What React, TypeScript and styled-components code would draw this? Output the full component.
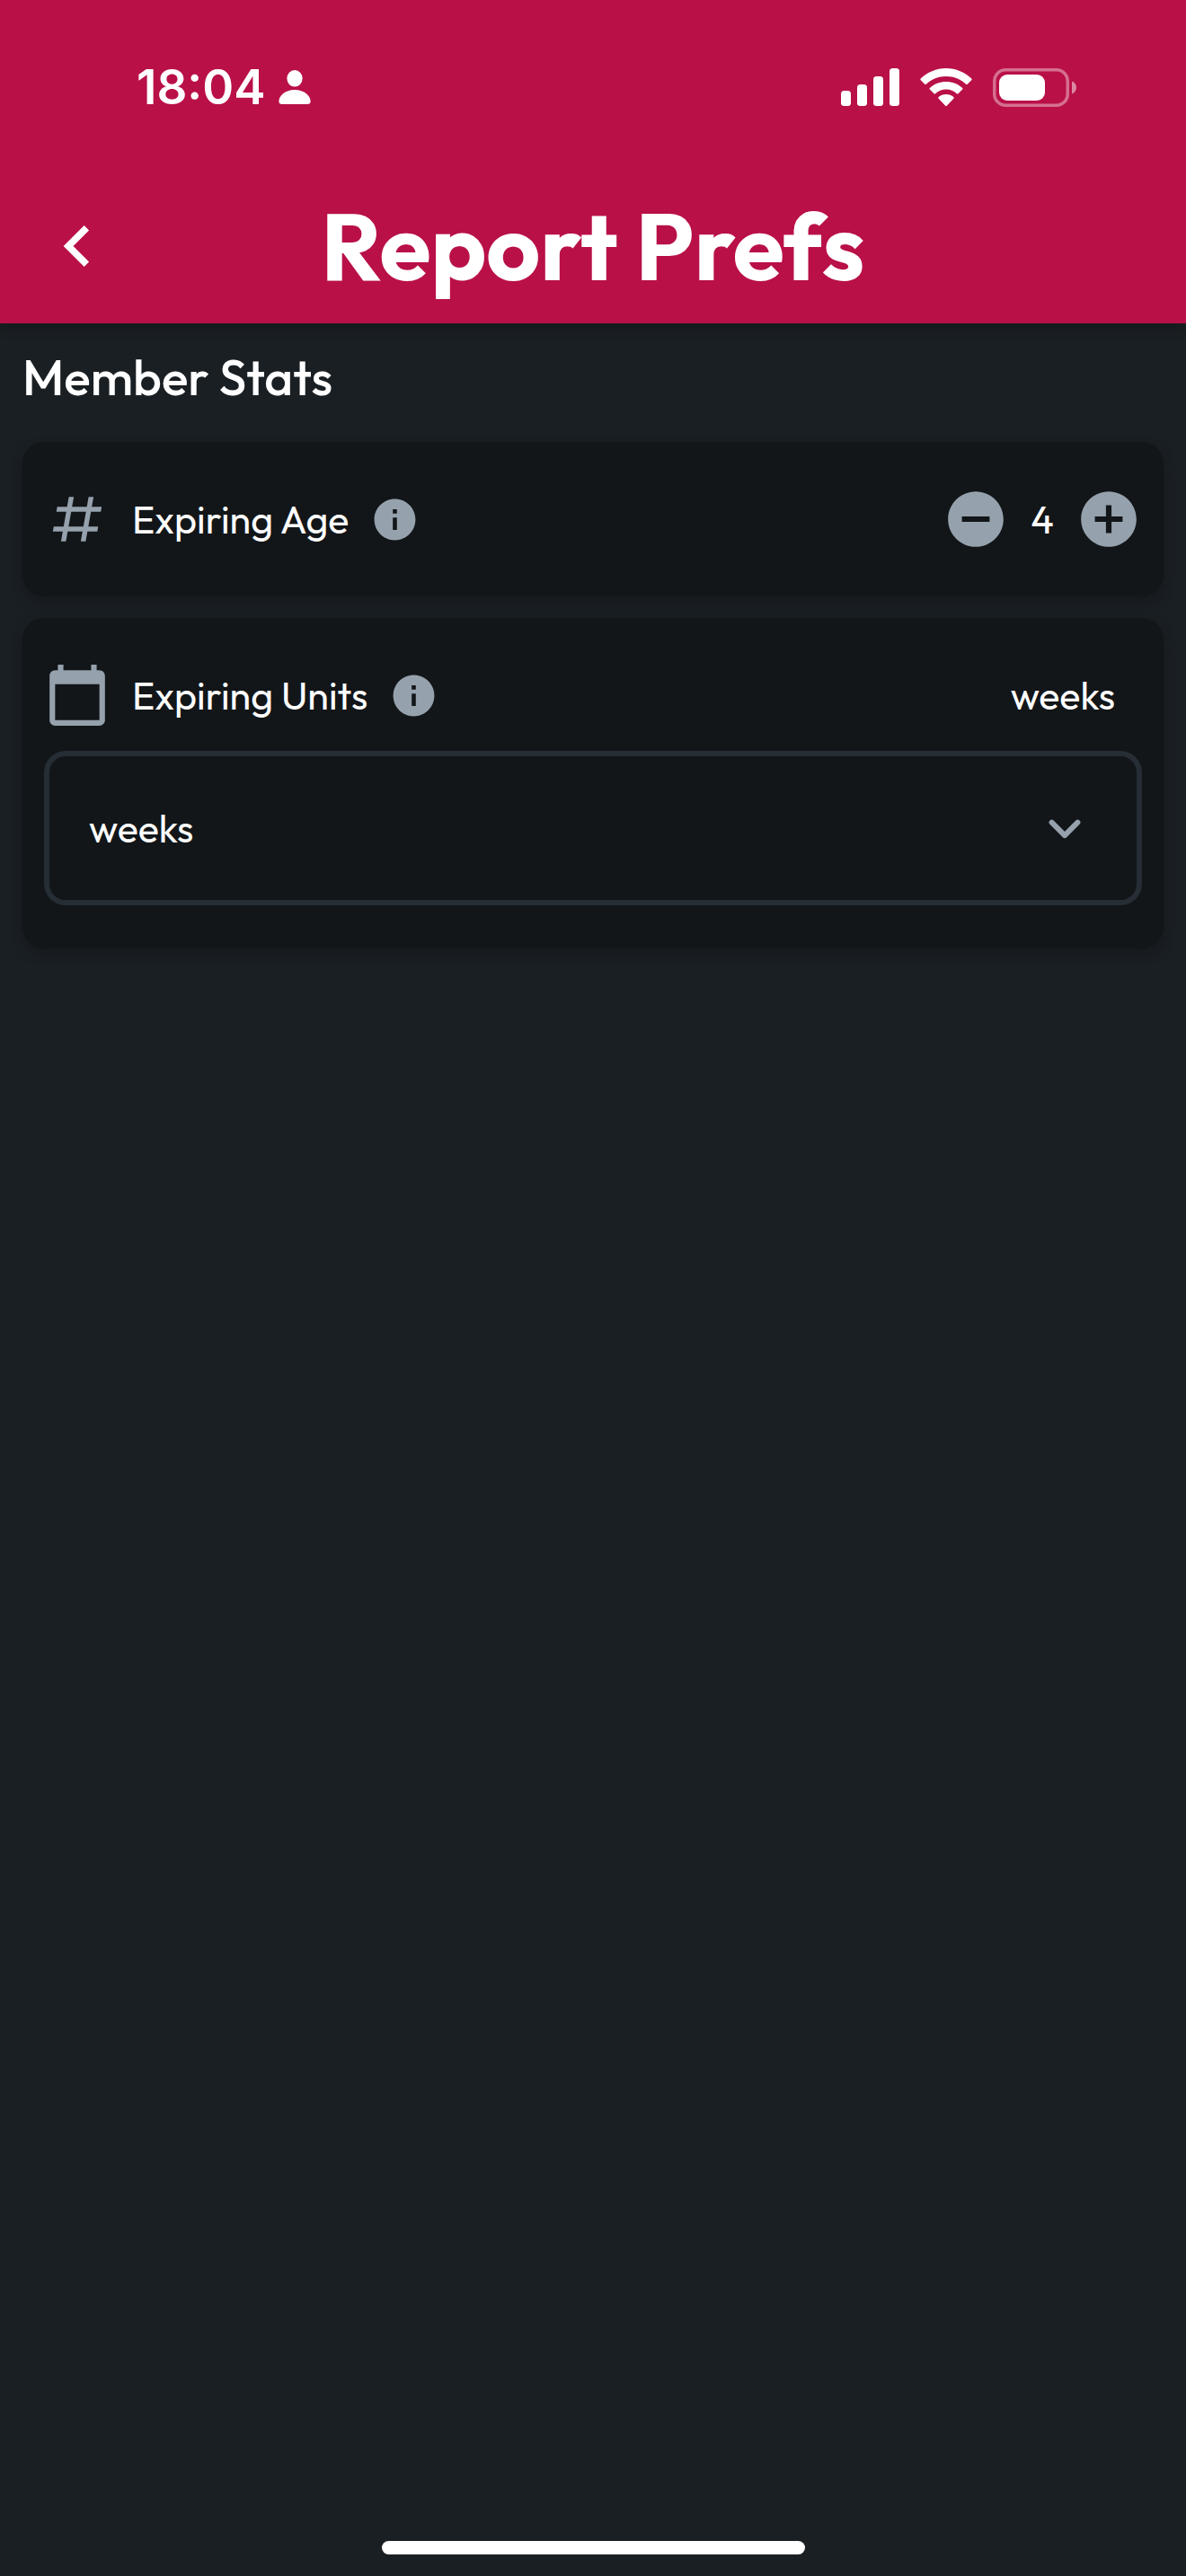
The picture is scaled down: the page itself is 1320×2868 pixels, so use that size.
import React, { useState } from "react";
import styled, { createGlobalStyle } from "styled-components";

const colors = {
  primary: "#b91047",
  background: "#1a1f23",
  card: "#121619",
  line: "#262d34",
  muted: "#95a1ac",
  text: "#ffffff",
};

const GlobalStyle = createGlobalStyle`
  * {
    box-sizing: border-box;
  }

  body {
    margin: 0;
    background: ${colors.background};
    color: ${colors.text};
    font-family: Outfit, Lato, "Liberation Sans", sans-serif;
    font-weight: 400;
  }
`;

const Page = styled.div`
  display: flex;
  flex-direction: column;
  min-height: 100vh;
`;

const Header = styled.header`
  background: ${colors.primary};
  box-shadow: 0 6px 12px rgba(0, 0, 0, 0.2);
`;

const StatusBar = styled.div`
  display: flex;
  align-items: center;
  justify-content: space-between;
  height: 188px;
  padding: 6px 121px 0 152px;
`;

const StatusGroup = styled.div<{ $gap: number }>`
  display: flex;
  align-items: center;
  gap: ${(p) => p.$gap}px;
`;

const Clock = styled.time`
  font-family: Inter, sans-serif;
  font-size: 53px;
  font-weight: 600;
  line-height: 64px;
`;

const NavBar = styled.div`
  display: grid;
  grid-template-columns: 92px 1fr 92px;
  align-items: center;
  height: 172px;
  padding: 0 40px;
`;

const Title = styled.h1`
  margin: 0;
  font-size: 104px;
  font-weight: 700;
  line-height: 130px;
  text-align: center;
`;

const IconButton = styled.button`
  display: flex;
  padding: 0;
  border: 0;
  background: none;
  color: inherit;
  cursor: pointer;
`;

const Main = styled.main`
  display: flex;
  flex-direction: column;
  gap: 24px;
  padding: 24px 25px;
`;

const SectionTitle = styled.h2`
  margin: 0;
  padding-bottom: 12px;
  font-size: 55px;
  font-weight: 500;
  line-height: 72px;
`;

const Card = styled.section`
  padding: 24px;
  border-radius: 24px;
  background: ${colors.card};
  box-shadow: 0 6px 12px rgba(20, 20, 26, 0.6);
`;

const SelectCard = styled(Card)`
  padding-bottom: 48px;
`;

const Row = styled.div`
  display: flex;
  align-items: center;
  gap: 24px;
  height: 124px;
  color: ${colors.muted};
`;

const IconSlot = styled.span`
  display: flex;
  justify-content: center;
  width: 74px;
`;

const Label = styled.label`
  color: ${colors.text};
  font-size: 43px;
  line-height: 56px;
`;

const Stepper = styled.div`
  display: flex;
  align-items: center;
  margin-left: auto;
`;

const Count = styled.output`
  width: 74px;
  color: ${colors.text};
  font-size: 43px;
  line-height: 56px;
  text-align: center;
`;

const CurrentValue = styled.span`
  margin-left: auto;
  padding-right: 30px;
  color: ${colors.text};
  font-size: 43px;
  line-height: 56px;
`;

const SelectBox = styled.div`
  display: grid;
  align-items: center;
  color: ${colors.muted};

  > * {
    grid-area: 1 / 1;
  }
`;

const Select = styled.select`
  appearance: none;
  width: 100%;
  height: 172px;
  padding: 0 108px 0 44px;
  border: 6px solid ${colors.line};
  border-radius: 24px;
  background: ${colors.card};
  color: ${colors.text};
  font-family: inherit;
  font-size: 43px;
  font-weight: inherit;
`;

const SelectArrow = styled.span`
  display: flex;
  justify-self: end;
  padding-right: 50px;
  pointer-events: none;
`;

const HomeIndicator = styled.div`
  width: 471px;
  height: 15px;
  margin: auto auto 24px;
  border-radius: 8px;
  background: ${colors.text};
`;

const paths = {
  back: "M15.41 16.58L10.83 12l4.58-4.59L14 6l-6 6 6 6z",
  pound:
    "M5.41 21L6.12 17H2.12L2.47 15H6.47L7.53 9H3.53L3.88 7H7.88L8.59 3H10.59L9.88 7H15.88L16.59 3H18.59L17.88 7H21.88L21.53 9H17.53L16.47 15H20.47L20.12 17H16.12L15.41 21H13.41L14.12 17H8.12L7.41 21zM9.53 9L8.47 15H14.47L15.53 9z",
  calendar:
    "M20 3h-1V1h-2v2H7V1H5v2H4c-1.1 0-2 .9-2 2v16c0 1.1.9 2 2 2h16c1.1 0 2-.9 2-2V5c0-1.1-.9-2-2-2zm0 18H4V8h16v13z",
  info: "M12 2C6.48 2 2 6.48 2 12s4.48 10 10 10 10-4.48 10-10S17.52 2 12 2zm1 15h-2v-6h2v6zm0-8h-2V7h2v2z",
  minus:
    "M12 2C6.48 2 2 6.48 2 12s4.48 10 10 10 10-4.48 10-10S17.52 2 12 2zm5 11H7v-2h10v2z",
  plus: "M12 2C6.48 2 2 6.48 2 12s4.48 10 10 10 10-4.48 10-10S17.52 2 12 2zm5 11h-4v4h-2v-4H7v-2h4V7h2v4h4v2z",
};

function Icon({ name, size }: { name: keyof typeof paths; size: number }) {
  return (
    <svg width={size} height={size} viewBox="0 0 24 24" fill="currentColor" aria-hidden="true">
      <path d={paths[name]} />
    </svg>
  );
}

function PersonIcon() {
  return (
    <svg width="36" height="38" viewBox="0 0 36 38" fill="currentColor" aria-hidden="true">
      <ellipse cx="18" cy="9.3" rx="8.6" ry="9.3" />
      <path d="M4 38C1.500 38 .4 37 .4 34.800C.4 29 7 22 18 22s17.600 7 17.600 12.800C35.600 37 34.500 38 32 38z" />
    </svg>
  );
}

function SignalIcon() {
  return (
    <svg width="65" height="42" viewBox="0 0 65 42" fill="currentColor" aria-hidden="true">
      <rect x="0" y="25" width="11" height="17" rx="3.500" />
      <rect x="18" y="18" width="11" height="24" rx="3.500" />
      <rect x="36" y="9" width="11" height="33" rx="3.500" />
      <rect x="54" y="0" width="11" height="42" rx="3.500" />
    </svg>
  );
}

function WifiIcon() {
  return (
    <svg width="58" height="43" viewBox="0 0 58 43" fill="currentColor" aria-hidden="true">
      <path d="M29 0C40 0 50 4.500 57.300 11.500c.5.500.5 1.200 0 1.700l-4.600 4.500c-.5.500-1.100.5-1.600 0C45.300 12.200 37.500 9 29 9S12.700 12.200 6.900 17.700c-.5.500-1.100.5-1.600 0L.7 13.200c-.5-.5-.5-1.200 0-1.700C8 4.500 18 0 29 0z" />
      <path d="M29 15c7 0 13.400 2.600 18.200 7 .5.500.5 1.100 0 1.600l-4.700 4.600c-.5.500-1.100.5-1.600 0C37.700 25.400 33.600 23.600 29 23.600s-8.700 1.800-11.900 4.600c-.5.500-1.100.5-1.600 0l-4.700-4.600c-.5-.5-.5-1.100 0-1.600C15.600 17.600 22 15 29 15z" />
      <path d="M29 29c3.300 0 6.200 1.200 8.400 3.100.5.500.5 1.100 0 1.600l-7.600 8.100c-.5.500-1.100.5-1.600 0l-7.600-8.100c-.5-.5-.5-1.100 0-1.600C22.800 30.200 25.700 29 29 29z" />
    </svg>
  );
}

function BatteryIcon() {
  return (
    <svg width="94" height="43" viewBox="0 0 94 43" aria-hidden="true">
      <rect x="1.750" y="1.750" width="81.500" height="39.500" rx="12.500" fill="none" stroke="#fff" strokeOpacity=".4" strokeWidth="3.500" />
      <rect x="7" y="7" width="51" height="29" rx="9" fill="#fff" />
      <path d="M88 14.500c3 1 5 3.800 5 7s-2 6-5 7z" fill="#fff" fillOpacity=".5" />
    </svg>
  );
}

function ChevronDown() {
  return (
    <svg width="72" height="72" viewBox="0 0 24 24" fill="none" stroke="currentColor" strokeWidth="2" strokeLinecap="round" strokeLinejoin="round" aria-hidden="true">
      <path d="M7.200 9.900l4.800 4.800 4.800-4.800" />
    </svg>
  );
}

export default function App() {
  const [age, setAge] = useState(4);
  const [units, setUnits] = useState("weeks");

  return (
    <Page>
      <GlobalStyle />
      <Header>
        <StatusBar>
          <StatusGroup $gap={14}>
            <Clock>18:04</Clock>
            <PersonIcon />
          </StatusGroup>
          <StatusGroup $gap={23}>
            <SignalIcon />
            <WifiIcon />
            <BatteryIcon />
          </StatusGroup>
        </StatusBar>
        <NavBar>
          <IconButton type="button" aria-label="Back">
            <Icon name="back" size={92} />
          </IconButton>
          <Title>Report Prefs</Title>
        </NavBar>
      </Header>
      <Main>
        <SectionTitle>Member Stats</SectionTitle>
        <Card>
          <Row>
            <IconSlot>
              <Icon name="pound" size={66} />
            </IconSlot>
            <Label htmlFor="age">Expiring Age</Label>
            <IconButton type="button" aria-label="About expiring age">
              <Icon name="info" size={55} />
            </IconButton>
            <Stepper>
              <IconButton type="button" aria-label="Decrease" onClick={() => setAge(Math.max(0, age - 1))}>
                <Icon name="minus" size={74} />
              </IconButton>
              <Count id="age">{age}</Count>
              <IconButton type="button" aria-label="Increase" onClick={() => setAge(age + 1)}>
                <Icon name="plus" size={74} />
              </IconButton>
            </Stepper>
          </Row>
        </Card>
        <SelectCard>
          <Row>
            <IconSlot>
              <Icon name="calendar" size={74} />
            </IconSlot>
            <Label htmlFor="units">Expiring Units</Label>
            <IconButton type="button" aria-label="About expiring units">
              <Icon name="info" size={55} />
            </IconButton>
            <CurrentValue>{units}</CurrentValue>
          </Row>
          <SelectBox>
            <Select id="units" value={units} onChange={(e) => setUnits(e.target.value)}>
              <option value="days">days</option>
              <option value="weeks">weeks</option>
              <option value="months">months</option>
            </Select>
            <SelectArrow>
              <ChevronDown />
            </SelectArrow>
          </SelectBox>
        </SelectCard>
      </Main>
      <HomeIndicator />
    </Page>
  );
}
